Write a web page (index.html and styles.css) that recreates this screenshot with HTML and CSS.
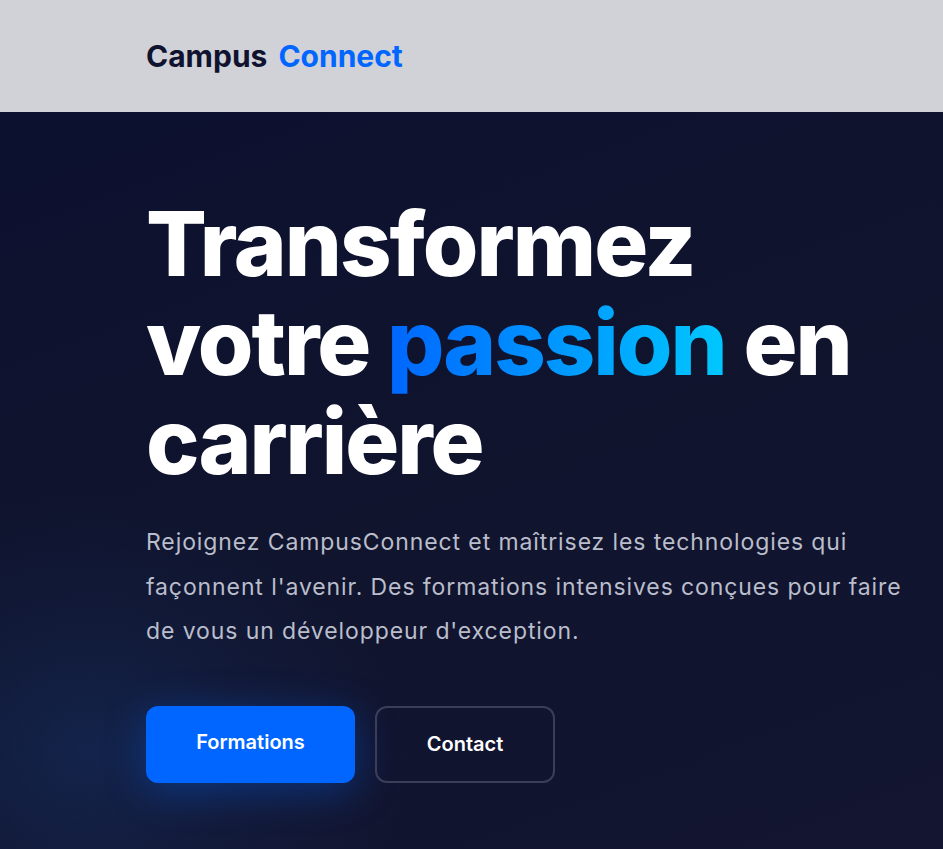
FILE: index.html
```
<!DOCTYPE html>
<html lang="fr">
<head>
<meta charset="utf-8">
<title>CampusConnect</title>
<link rel="stylesheet" href="styles.css">
</head>
<body>
<header class="site-header">
  <div class="logo"><span class="logo-dark">Campus</span><span class="logo-blue">Connect</span></div>
</header>
<main class="hero">
  <div class="hero-inner">
    <h1 class="hero-title">Transformez votre <span class="accent">passion</span> en carrière</h1>
    <p class="hero-text">Rejoignez CampusConnect et maîtrisez les technologies qui façonnent l'avenir. Des formations intensives conçues pour faire de vous un développeur d'exception.</p>
    <div class="hero-actions">
      <a class="btn btn-primary" href="#">Formations</a>
      <a class="btn btn-outline" href="#">Contact</a>
    </div>
  </div>
</main>
</body>
</html>
```
FILE: styles.css
```
* { box-sizing: border-box; }
html, body { margin: 0; padding: 0; }
body {
  font-family: Inter, "Noto Sans", sans-serif;
  background: #10132b;
  min-height: 849px;
  overflow: hidden;
}
.site-header {
  height: 112px;
  background: #d1d2d7;
  display: flex;
  align-items: center;
  padding-left: 146px;
}
.logo {
  display: flex;
  gap: 11px;
  font-size: 30px;
  font-weight: 700;
  letter-spacing: 0;
}
.logo-dark { color: #0f1330; }
.logo-blue { color: #0066ff; }
.hero {
  min-height: 737px;
  background:
    radial-gradient(ellipse 320px 260px at 90px 640px, rgba(25, 75, 150, 0.28) 0, rgba(25, 70, 140, 0.12) 50%, rgba(16, 19, 43, 0) 100%),
    linear-gradient(160deg, #0c1130 0%, #10142d 50%, #131531 100%);
  padding: 82px 0 0 146px;
}
.hero-inner { max-width: 770px; }
.hero-title {
  margin: 0;
  color: #ffffff;
  font-size: 90px;
  font-weight: 800;
  line-height: 99px;
  letter-spacing: -2px;
}
.accent {
  background: linear-gradient(90deg, #0066ff 0%, #00c8ff 100%);
  -webkit-background-clip: text;
  background-clip: text;
  color: transparent;
}
.hero-text {
  margin: 29px 0 0;
  color: #babdcb;
  font-size: 23px;
  line-height: 44.5px;
  letter-spacing: 0.9px;
  max-width: 770px;
}
.hero-actions {
  display: flex;
  gap: 20px;
  margin-top: 52px;
}
.btn {
  display: flex;
  align-items: center;
  justify-content: center;
  height: 77px;
  border-radius: 12px;
  color: #ffffff;
  font-size: 20px;
  font-weight: 600;
  text-decoration: none;
}
.btn-primary {
  width: 209px;
  background: #0066ff;
  box-shadow: 0 8px 40px rgba(0, 102, 255, 0.35);
  padding-bottom: 4px;
}
.btn-outline {
  width: 180px;
  border: 2px solid #3b3e58;
}
```
